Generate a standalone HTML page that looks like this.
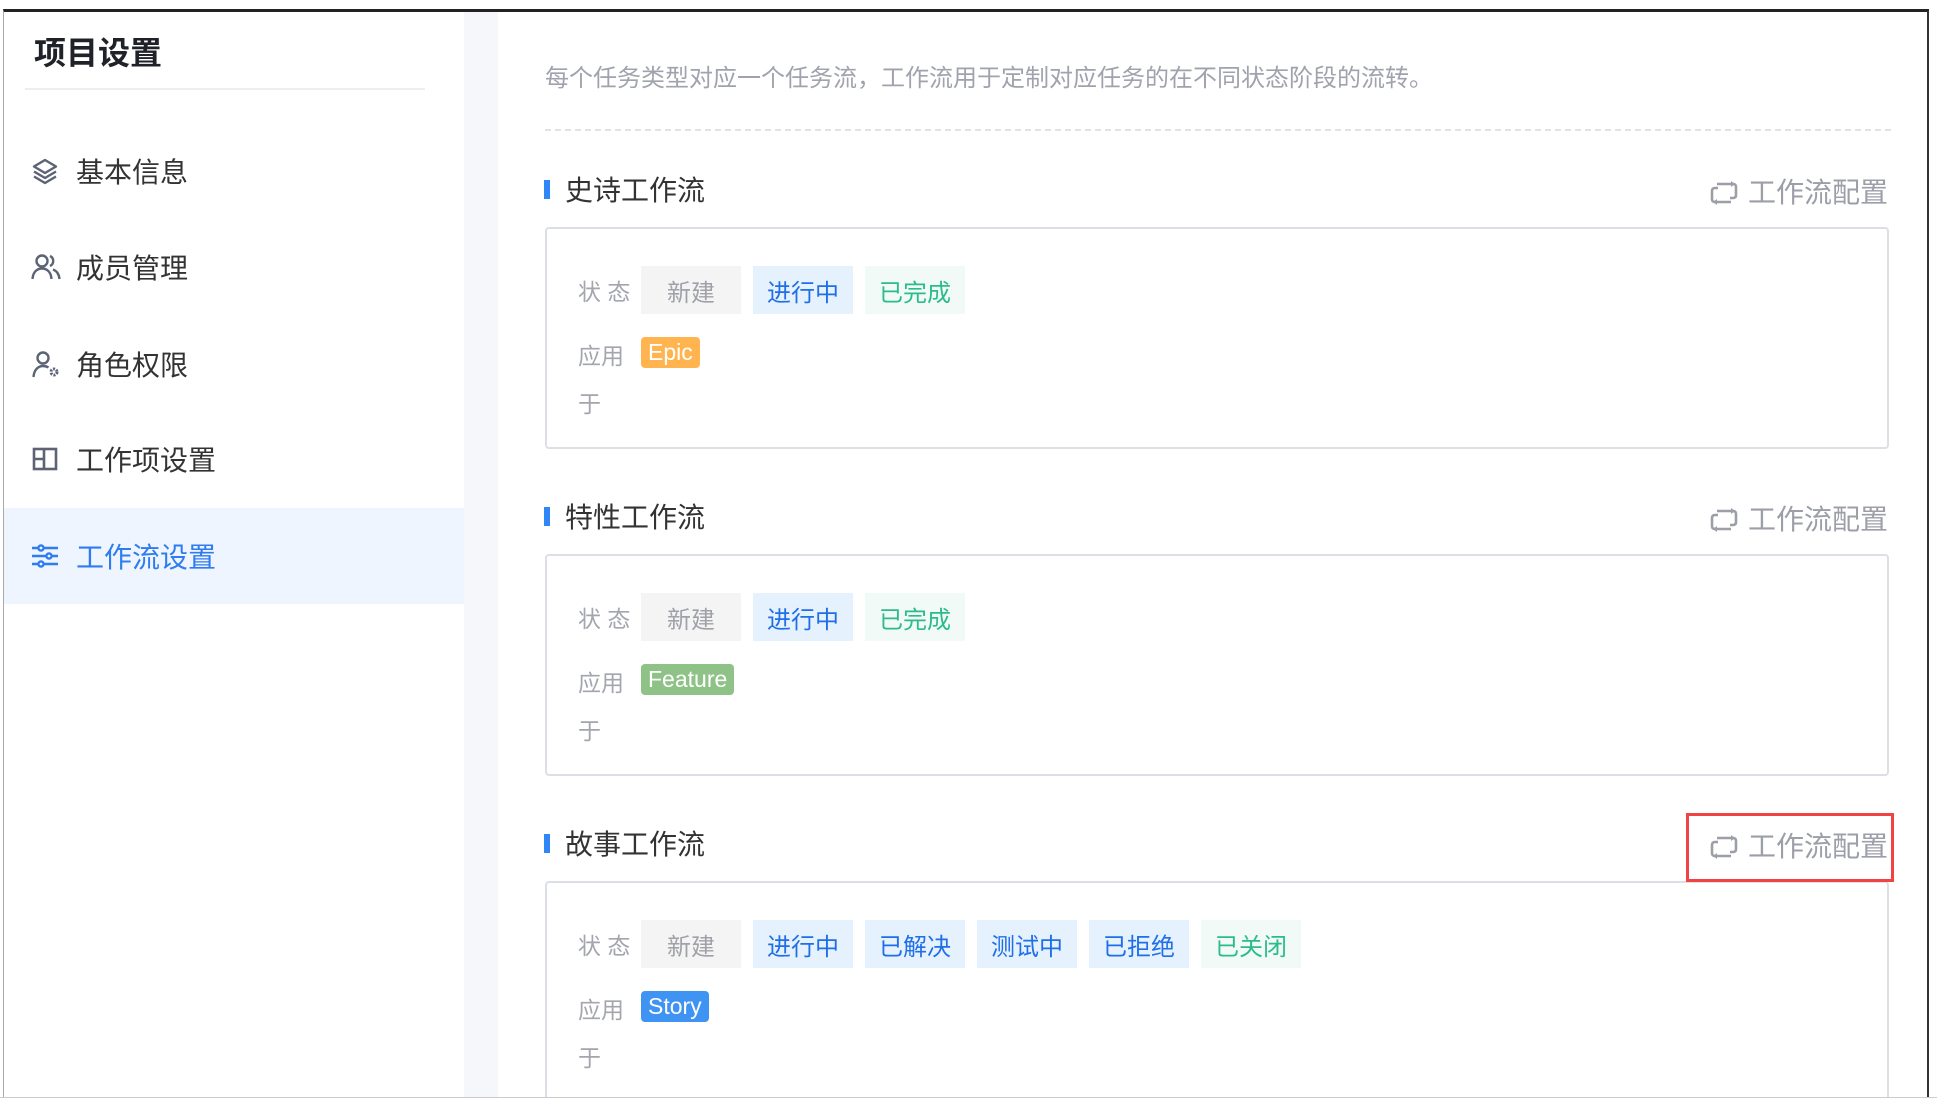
<!DOCTYPE html>
<html><head><meta charset="utf-8"><style>
*{margin:0;padding:0;box-sizing:border-box}
body{width:1937px;height:1105px;background:#fff;position:relative;overflow:hidden;font-family:"Liberation Sans","Noto Sans CJK SC",sans-serif}
.a{position:absolute}
.frame{left:3px;top:9px;width:1926px;height:1089px;border-top:3px solid #222;border-left:1px solid #aaa;border-right:2px solid #333;border-bottom:1px solid #ccc}
.side{left:4px;top:12px;width:460px;height:1085px;background:#fff}
.strip{left:464px;top:12px;width:34px;height:1085px;background:#f6f7fa}
.title{left:34px;top:37px;font-size:32px;font-weight:bold;color:#1f2329;line-height:32px}
.div{left:25px;top:88px;width:400px;height:2px;background:#eceef2}
.mi{left:4px;width:460px;height:96px;display:flex;align-items:center;font-size:28px;color:#333}
.mi svg{position:absolute;left:27px}
.mi span{position:absolute;left:72px}
.act{background:#eef5fe;color:#2e7cf0}
.desc{left:545px;top:65px;font-size:24px;color:#a0a3ad;line-height:28px}
.dash{left:545px;top:129px;width:1346px;border-top:2px dashed #e0e2e8}
.sec{left:544px;height:19px;width:6px;background:#2f86f6}
.st{left:565px;font-size:28px;color:#333;line-height:30px}
.cfg{left:1710px;font-size:28px;color:#9c9ea8;line-height:30px;display:flex;align-items:center}
.cfg svg{margin-right:10px}
.box{left:545px;width:1344px;border:2px solid #dcdfe6;border-radius:4px;background:#fff}
.lbl{position:absolute;left:31px;font-size:23px;color:#a4a6ae;line-height:26px}
.tag{position:absolute;top:37px;width:100px;height:48px;font-size:24px;display:flex;align-items:center;justify-content:center}
.g{background:#f4f4f5;color:#a0a2a8}
.b{background:#e6f1fe;color:#1f6fe6}
.gr{background:#f1faf7;color:#2cbc8a}
.ap{position:absolute;top:108px;height:31px;border-radius:4px;color:#fff;font-size:23px;display:flex;align-items:center;padding:0 7px}
.red{left:1686px;top:813px;width:208px;height:69px;border:3px solid #f04444}
</style></head><body>
<div class="a frame"></div>
<div class="a side"></div>
<div class="a strip"></div>
<div class="a title">项目设置</div>
<div class="a div"></div>

<div class="a mi" style="top:123px"><svg width="28" height="28" viewBox="0 0 28 28" fill="none" stroke="#5b6375" stroke-width="2.4" stroke-linejoin="round"><path d="M14 3 L25 9.5 L14 16 L3 9.5Z"/><path d="M3 14.5 L14 21 L25 14.5"/><path d="M3 19.5 L14 26 L25 19.5"/></svg><span>基本信息</span></div>
<div class="a mi" style="top:219px"><svg width="30" height="28" viewBox="0 0 30 28" fill="none" stroke="#5b6375" stroke-width="2.4"><circle cx="11" cy="8" r="5.5"/><path d="M1.5 26 C2 18 7 15.5 11 15.5 C15 15.5 20 18 20.5 26"/><path d="M19 3 A5.5 5.5 0 0 1 19 13"/><path d="M22 16.5 C26 18 28 21 28.5 26"/></svg><span>成员管理</span></div>
<div class="a mi" style="top:316px"><svg width="30" height="28" viewBox="0 0 30 28" fill="none" stroke="#5b6375" stroke-width="2.4"><circle cx="12" cy="8" r="5.5"/><path d="M2.5 27 C3 19 8 16 12 16 C14 16 16 16.5 17.5 17.5"/><circle cx="23" cy="22" r="3" stroke-width="3" stroke-dasharray="2 1.2"/></svg><span>角色权限</span></div>
<div class="a mi" style="top:411px"><svg width="28" height="28" viewBox="0 0 28 28" fill="none" stroke="#5b6375" stroke-width="2.6"><rect x="3" y="4" width="22" height="20"/><path d="M13 4 V24 M3 14 H13"/></svg><span>工作项设置</span></div>
<div class="a mi act" style="top:508px"><svg width="28" height="28" viewBox="0 0 28 28" fill="none" stroke="#2e7cf0" stroke-width="2.4"><path d="M1 6 H27 M1 14 H27 M1 22 H27"/><circle cx="10" cy="6" r="2.6" fill="#eef5fe"/><circle cx="18" cy="14" r="2.6" fill="#eef5fe"/><circle cx="10" cy="22" r="2.6" fill="#eef5fe"/></svg><span>工作流设置</span></div>

<div class="a desc">每个任务类型对应一个任务流，工作流用于定制对应任务的在不同状态阶段的流转。</div>
<div class="a dash"></div>

<div class="a sec" style="top:180px"></div>
<div class="a st" style="top:176px">史诗工作流</div>
<div class="a cfg" style="top:178px"><svg width="28" height="26" viewBox="0 0 28 26" fill="none" stroke="#9c9ea8" stroke-width="2.6"><path d="M7 4 H23 Q26 4 26 7 V15 Q26 18 23 18 H20"/><path d="M21 1 L25 4 L21 7" stroke-width="0" fill="#9c9ea8"/><path d="M21 22 H5 Q2 22 2 19 V11 Q2 8 5 8 H8"/><path d="M7 19 L3 22 L7 25Z" stroke-width="0" fill="#9c9ea8"/></svg>工作流配置</div>
<div class="a box" style="top:227px;height:222px">
<div class="lbl" style="top:50px">状 态</div>
<div class="tag g" style="left:94px">新建</div><div class="tag b" style="left:206px">进行中</div><div class="tag gr" style="left:318px">已完成</div>
<div class="lbl" style="top:114px">应用</div>
<div class="ap" style="left:94px;background:#ffb44f">Epic</div>
<div class="lbl" style="top:162px">于</div>
</div>

<div class="a sec" style="top:507px"></div>
<div class="a st" style="top:503px">特性工作流</div>
<div class="a cfg" style="top:505px"><svg width="28" height="26" viewBox="0 0 28 26" fill="none" stroke="#9c9ea8" stroke-width="2.6"><path d="M7 4 H23 Q26 4 26 7 V15 Q26 18 23 18 H20"/><path d="M21 1 L25 4 L21 7" stroke-width="0" fill="#9c9ea8"/><path d="M21 22 H5 Q2 22 2 19 V11 Q2 8 5 8 H8"/><path d="M7 19 L3 22 L7 25Z" stroke-width="0" fill="#9c9ea8"/></svg>工作流配置</div>
<div class="a box" style="top:554px;height:222px">
<div class="lbl" style="top:50px">状 态</div>
<div class="tag g" style="left:94px">新建</div><div class="tag b" style="left:206px">进行中</div><div class="tag gr" style="left:318px">已完成</div>
<div class="lbl" style="top:114px">应用</div>
<div class="ap" style="left:94px;background:#8fc287">Feature</div>
<div class="lbl" style="top:162px">于</div>
</div>

<div class="a sec" style="top:834px"></div>
<div class="a st" style="top:830px">故事工作流</div>
<div class="a cfg" style="top:832px"><svg width="28" height="26" viewBox="0 0 28 26" fill="none" stroke="#9c9ea8" stroke-width="2.6"><path d="M7 4 H23 Q26 4 26 7 V15 Q26 18 23 18 H20"/><path d="M21 1 L25 4 L21 7" stroke-width="0" fill="#9c9ea8"/><path d="M21 22 H5 Q2 22 2 19 V11 Q2 8 5 8 H8"/><path d="M7 19 L3 22 L7 25Z" stroke-width="0" fill="#9c9ea8"/></svg>工作流配置</div>
<div class="a box" style="top:881px;height:216px;border-bottom:none;border-radius:4px 4px 0 0">
<div class="lbl" style="top:50px">状 态</div>
<div class="tag g" style="left:94px">新建</div><div class="tag b" style="left:206px">进行中</div><div class="tag b" style="left:318px">已解决</div><div class="tag b" style="left:430px">测试中</div><div class="tag b" style="left:542px">已拒绝</div><div class="tag gr" style="left:654px">已关闭</div>
<div class="lbl" style="top:114px">应用</div>
<div class="ap" style="left:94px;background:#3f93f2">Story</div>
<div class="lbl" style="top:162px">于</div>
</div>
<div class="a red"></div>
<div class="a" style="left:0;top:1097px;width:1937px;height:8px;background:#fff;border-top:1px solid #ccc"></div>
</body></html>
